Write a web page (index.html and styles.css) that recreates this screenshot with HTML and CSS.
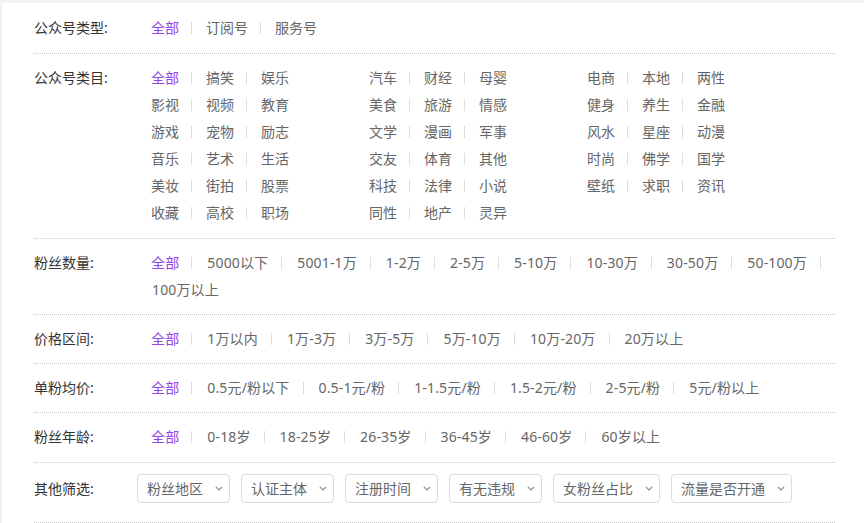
FILE: index.html
```html
<!DOCTYPE html>
<html lang="zh-CN">
<head>
<meta charset="utf-8">
<title>筛选</title>
<link rel="stylesheet" href="styles.css">
</head>
<body>
<div class="panel">
  <div class="row first">
    <div class="label">公众号类型:</div>
    <div class="opts">
      <a class="opt active">全部</a><a class="opt">订阅号</a><a class="opt">服务号</a>
    </div>
  </div>
  <div class="row cats">
    <div class="label">公众号类目:</div>
    <div class="grid">
      <div class="grp"><a class="opt active">全部</a><a class="opt">搞笑</a><a class="opt">娱乐</a></div>
      <div class="grp"><a class="opt">汽车</a><a class="opt">财经</a><a class="opt">母婴</a></div>
      <div class="grp"><a class="opt">电商</a><a class="opt">本地</a><a class="opt">两性</a></div>
      <div class="grp"><a class="opt">影视</a><a class="opt">视频</a><a class="opt">教育</a></div>
      <div class="grp"><a class="opt">美食</a><a class="opt">旅游</a><a class="opt">情感</a></div>
      <div class="grp"><a class="opt">健身</a><a class="opt">养生</a><a class="opt">金融</a></div>
      <div class="grp"><a class="opt">游戏</a><a class="opt">宠物</a><a class="opt">励志</a></div>
      <div class="grp"><a class="opt">文学</a><a class="opt">漫画</a><a class="opt">军事</a></div>
      <div class="grp"><a class="opt">风水</a><a class="opt">星座</a><a class="opt">动漫</a></div>
      <div class="grp"><a class="opt">音乐</a><a class="opt">艺术</a><a class="opt">生活</a></div>
      <div class="grp"><a class="opt">交友</a><a class="opt">体育</a><a class="opt">其他</a></div>
      <div class="grp"><a class="opt">时尚</a><a class="opt">佛学</a><a class="opt">国学</a></div>
      <div class="grp"><a class="opt">美妆</a><a class="opt">街拍</a><a class="opt">股票</a></div>
      <div class="grp"><a class="opt">科技</a><a class="opt">法律</a><a class="opt">小说</a></div>
      <div class="grp"><a class="opt">壁纸</a><a class="opt">求职</a><a class="opt">资讯</a></div>
      <div class="grp"><a class="opt">收藏</a><a class="opt">高校</a><a class="opt">职场</a></div>
      <div class="grp"><a class="opt">同性</a><a class="opt">地产</a><a class="opt">灵异</a></div>
    </div>
  </div>
  <div class="row">
    <div class="label">粉丝数量:</div>
    <div class="opts num">
      <a class="opt active">全部</a><a class="opt">5000以下</a><a class="opt">5001-1万</a><a class="opt">1-2万</a><a class="opt">2-5万</a><a class="opt">5-10万</a><a class="opt">10-30万</a><a class="opt">30-50万</a><a class="opt">50-100万</a><a class="opt">100万以上</a>
    </div>
  </div>
  <div class="row">
    <div class="label">价格区间:</div>
    <div class="opts num">
      <a class="opt active">全部</a><a class="opt">1万以内</a><a class="opt">1万-3万</a><a class="opt">3万-5万</a><a class="opt">5万-10万</a><a class="opt">10万-20万</a><a class="opt">20万以上</a>
    </div>
  </div>
  <div class="row">
    <div class="label">单粉均价:</div>
    <div class="opts num">
      <a class="opt active">全部</a><a class="opt">0.5元/粉以下</a><a class="opt">0.5-1元/粉</a><a class="opt">1-1.5元/粉</a><a class="opt">1.5-2元/粉</a><a class="opt">2-5元/粉</a><a class="opt">5元/粉以上</a>
    </div>
  </div>
  <div class="row age">
    <div class="label">粉丝年龄:</div>
    <div class="opts num">
      <a class="opt active">全部</a><a class="opt">0-18岁</a><a class="opt">18-25岁</a><a class="opt">26-35岁</a><a class="opt">36-45岁</a><a class="opt">46-60岁</a><a class="opt">60岁以上</a>
    </div>
  </div>
  <div class="row other">
    <div class="label">其他筛选:</div>
    <div class="selects">
      <div class="sel"><span>粉丝地区</span><svg class="chev" viewBox="0 0 8 5" width="8" height="5"><path d="M0.8 0.8 L4 4 L7.2 0.8" fill="none" stroke="#888" stroke-width="1.1"/></svg></div>
      <div class="sel"><span>认证主体</span><svg class="chev" viewBox="0 0 8 5" width="8" height="5"><path d="M0.8 0.8 L4 4 L7.2 0.8" fill="none" stroke="#888" stroke-width="1.1"/></svg></div>
      <div class="sel"><span>注册时间</span><svg class="chev" viewBox="0 0 8 5" width="8" height="5"><path d="M0.8 0.8 L4 4 L7.2 0.8" fill="none" stroke="#888" stroke-width="1.1"/></svg></div>
      <div class="sel"><span>有无违规</span><svg class="chev" viewBox="0 0 8 5" width="8" height="5"><path d="M0.8 0.8 L4 4 L7.2 0.8" fill="none" stroke="#888" stroke-width="1.1"/></svg></div>
      <div class="sel"><span>女粉丝占比</span><svg class="chev" viewBox="0 0 8 5" width="8" height="5"><path d="M0.8 0.8 L4 4 L7.2 0.8" fill="none" stroke="#888" stroke-width="1.1"/></svg></div>
      <div class="sel"><span>流量是否开通</span><svg class="chev" viewBox="0 0 8 5" width="8" height="5"><path d="M0.8 0.8 L4 4 L7.2 0.8" fill="none" stroke="#888" stroke-width="1.1"/></svg></div>
    </div>
  </div>
</div>
</body>
</html>
```

FILE: styles.css
```css
html, body {
  margin: 0;
  padding: 0;
}
body {
  background: #f2f2f4;
  font-family: "Noto Sans", "Noto Sans CJK SC", sans-serif;
  font-size: 14px;
  color: #666;
  height: 523px;
  overflow: hidden;
}
.panel {
  margin: 3px 0 0 2px;
  background: #fff;
  padding: 0 29px 0 32px;
  min-height: 530px;
}
.row {
  display: flex;
  align-items: flex-start;
  padding: 10px 0 11px;
  border-bottom: 1px dotted #c4c4c4;
  line-height: 27px;
}
.row.first {
  padding-top: 11px;
  padding-bottom: 12px;
}
.row.cats {
  padding-bottom: 12px;
}
.row.age {
  padding-bottom: 12px;
}
.label {
  flex: 0 0 103px;
  width: 103px;
  color: #333;
  white-space: nowrap;
}
.opts {
  display: flex;
  flex-wrap: wrap;
  flex: 1;
}
.opt {
  display: block;
  padding: 0 13px 0 14px;
  color: #666;
  white-space: nowrap;
  cursor: pointer;
}
.opts.num .opt {
  padding: 0 14px 0 15px;
  letter-spacing: 0.15px;
}
.opts.num .opt:first-child {
  padding-left: 14px;
  padding-right: 13px;
}
.opt:not(:last-child) {
  background: linear-gradient(#dcdcdc, #dcdcdc) right center / 1px 12px no-repeat;
}
.opt.active {
  color: #9146e6;
}
.grid {
  display: grid;
  grid-template-columns: repeat(3, 218px);
}
.grp {
  display: flex;
}
.row.other {
  padding-top: 11px;
  padding-bottom: 19px;
}
.other .label {
  line-height: 29px;
}
.selects {
  display: flex;
  gap: 11px;
}
.sel {
  display: flex;
  align-items: center;
  height: 27px;
  border: 1px solid #dcdcdc;
  border-radius: 4px;
  padding: 0 6px 0 9px;
  color: #666;
  line-height: 27px;
  white-space: nowrap;
}
.chev {
  margin-left: 12px;
  display: block;
}
```
